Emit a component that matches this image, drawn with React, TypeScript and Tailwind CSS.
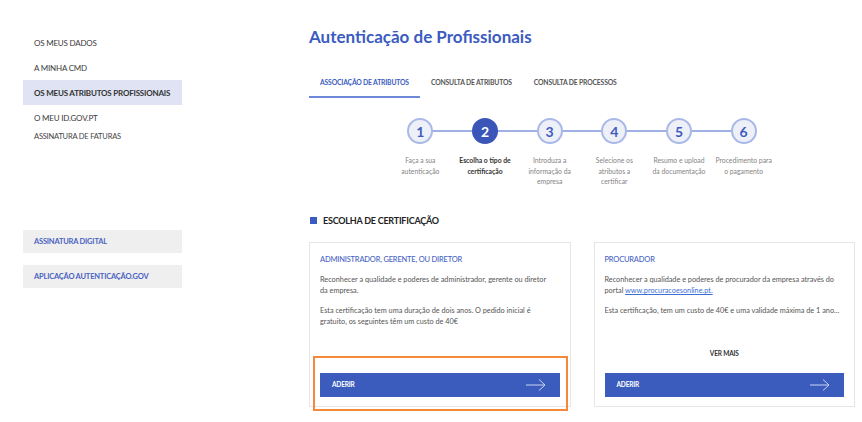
import React from 'react';

const steps = [
  { n: 1, label: ['Faça a sua', 'autenticação'] },
  { n: 2, label: ['Escolha o tipo de', 'certificação'] },
  { n: 3, label: ['Introduza a', 'informação da', 'empresa'] },
  { n: 4, label: ['Selecione os', 'atributos a', 'certificar'] },
  { n: 5, label: ['Resumo e upload', 'da documentação'] },
  { n: 6, label: ['Procedimento para', 'o pagamento'] },
];

const Arrow = () => (
  <svg width="20" height="12" viewBox="0 0 20 12" fill="none" stroke="#c9d3f2" strokeWidth="1">
    <path d="M0 6h19M13 0.5l6 5.5-6 5.5" />
  </svg>
);

const AderirButton = () => (
  <button className="w-full h-[24px] bg-[#3b5cbd] flex items-center justify-between pl-[12px] pr-[14px] text-white text-[6.5px] font-bold tracking-tight">
    ADERIR
    <Arrow />
  </button>
);

export default function App() {
  return (
    <div className="w-[862px] h-[422px] bg-white flex font-['Lato',sans-serif] overflow-hidden">
      {/* sidebar */}
      <aside className="w-[182px] pl-[23px] shrink-0 flex flex-col text-[8px] text-[#3a3a3a] tracking-tight">
        <div className="pl-[11px] pt-[37px] h-[50px]">OS MEUS DADOS</div>
        <div className="pl-[11px] pt-[13px] h-[30px] leading-[10px]">A MINHA CMD</div>
        <div className="pl-[11px] h-[25px] flex items-center bg-[#dfe3f3] font-bold text-[#333]">OS MEUS ATRIBUTOS PROFISSIONAIS</div>
        <div className="pl-[11px] pt-[8px] leading-[10px]">O MEU ID.GOV.PT</div>
        <div className="pl-[11px] pt-[9px] leading-[10px] text-[7.5px] text-[#444]">ASSINATURA DE FATURAS</div>
        <div className="mt-[88px] h-[23px] bg-[#efefef] pl-[11px] flex items-center font-bold text-[#4a63c2] text-[7.5px]">ASSINATURA DIGITAL</div>
        <div className="mt-[12px] h-[23px] bg-[#efefef] pl-[11px] flex items-center font-bold text-[#4a63c2] text-[7.5px]">APLICAÇÃO AUTENTICAÇÃO.GOV</div>
      </aside>

      {/* main */}
      <main className="ml-[127px] w-[546px] flex flex-col">
        <h1 className="mt-[25px] text-[17px] leading-[24px] font-bold text-[#3b5bc0]">Autenticação de Profissionais</h1>

        <div className="mt-[28px] flex text-[6.8px] font-bold tracking-tight">
          <div className="px-[11px] pb-[9px] text-[#3b5bc0] border-b-[2px] border-[#6f89d9]">ASSOCIAÇÃO DE ATRIBUTOS</div>
          <div className="px-[11px] text-[#555]">CONSULTA DE ATRIBUTOS</div>
          <div className="px-[11px] text-[#555]">CONSULTA DE PROCESSOS</div>
        </div>

        {/* stepper */}
        <div className="mt-[20px] ml-[79px] w-[388px] relative">
          <div className="absolute left-[32px] right-[32px] top-[12px] h-[2px] bg-[#9fb0e4]" />
          <div className="grid grid-cols-6 relative">
            {steps.map(s => (
              <div key={s.n} className="flex flex-col items-center">
                <div
                  className={
                    s.n === 2
                      ? 'w-[26px] h-[26px] rounded-full bg-[#3a56b8] border-[2px] border-[#3a56b8] text-white flex items-center justify-center text-[14px] font-bold'
                      : 'w-[26px] h-[26px] rounded-full bg-[#eef0f7] border-[2px] border-[#aab8e8] text-[#3d5bbf] flex items-center justify-center text-[14px] font-bold'
                  }
                >
                  {s.n}
                </div>
                <div
                  className={
                    s.n === 2
                      ? 'mt-[11px] text-center text-[6.8px] leading-[10.5px] font-bold text-[#333] whitespace-nowrap'
                      : 'mt-[11px] text-center text-[6.8px] leading-[10.5px] text-[#858585] whitespace-nowrap'
                  }
                >
                  {s.label.map(l => (
                    <div key={l}>{l}</div>
                  ))}
                </div>
              </div>
            ))}
          </div>
        </div>

        {/* section heading */}
        <div className="mt-[27px] flex items-center gap-[6px] pl-[1px]">
          <span className="w-[7px] h-[7px] bg-[#3b5bc0]" />
          <span className="text-[9px] font-bold text-[#222] tracking-tight">ESCOLHA DE CERTIFICAÇÃO</span>
        </div>

        {/* cards */}
        <div className="mt-[15px] flex gap-[23px]">
          <div className="relative w-[262px] h-[165px] border border-[#e6e6e6] px-[10px] pt-[11px] flex flex-col">
            <div className="text-[7.5px] font-medium text-[#4a64c4] tracking-tight">ADMINISTRADOR, GERENTE, OU DIRETOR</div>
            <p className="mt-[9px] text-[7.3px] leading-[11px] text-[#555] pr-[12px]">
              Reconhecer a qualidade e poderes de administrador, gerente ou diretor da empresa.
            </p>
            <p className="mt-[9px] text-[7.3px] leading-[11px] text-[#555] pr-[14px]">
              Esta certificação tem uma duração de dois anos. O pedido inicial é gratuito, os seguintes têm um custo de 40€
            </p>
            <div className="mt-auto mb-[9px]">
              <AderirButton />
            </div>
            <div className="absolute left-[3px] top-[113px] w-[255px] h-[55px] border-[2px] border-[#f5893a]" />
          </div>

          <div className="w-[262px] h-[165px] border border-[#e6e6e6] px-[10px] pt-[11px] flex flex-col">
            <div className="text-[7.5px] font-medium text-[#4a64c4] tracking-tight">PROCURADOR</div>
            <div className="mt-[9px] text-[7.3px] leading-[11px] text-[#555]">
              <div>Reconhecer a qualidade e poderes de procurador da empresa através do</div>
              <div>
                portal <span className="text-[#3b6fd6] underline">www.procuracoesonline.pt.</span>
              </div>
            </div>
            <p className="mt-[9px] text-[7.3px] leading-[11px] text-[#555] truncate">
              Esta certificação, tem um custo de 40€ e uma validade máxima de 1 ano...
            </p>
            <div className="mt-auto mb-[14px] text-center text-[6.5px] font-bold text-[#333] tracking-tight">VER MAIS</div>
            <div className="mb-[9px]">
              <AderirButton />
            </div>
          </div>
        </div>
      </main>
    </div>
  );
}
